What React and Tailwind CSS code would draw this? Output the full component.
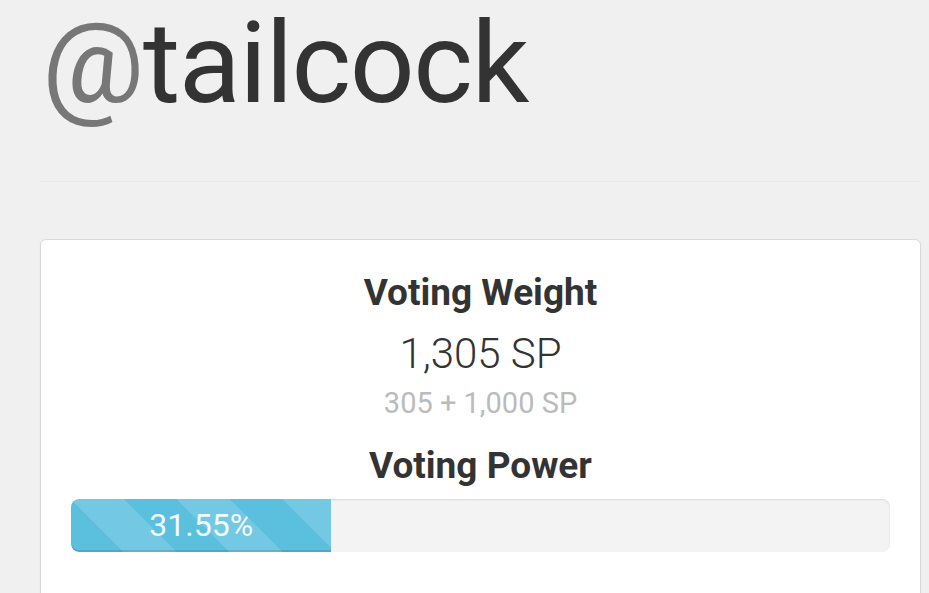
export default function App() {
  return (
    <div
      className="min-h-[593px] bg-[#f0f0f0] pl-[40px] pr-[8px] overflow-hidden"
      style={{ fontFamily: "Roboto, 'Liberation Sans', sans-serif" }}
    >
      <h1 className="-mt-[4px] pl-[2px] text-[114px] leading-[135px] font-normal text-[#333] tracking-[-1.5px]">
        <span className="text-[#777]">@</span>tailcock
      </h1>
      <div className="mt-[50px] h-px bg-[#e8e8e8]" />
      <div className="mt-[57px] h-[400px] rounded-[6px] border border-[#d9d9d9] bg-white shadow-[0_1px_2px_rgba(0,0,0,0.05)] px-[30px] pt-[33px]">
        <div className="flex flex-col items-center">
          <div className="text-[37px] leading-[40px] font-bold text-[#333]">Voting Weight</div>
          <div className="mt-[17px] text-[42px] leading-[48px] font-light text-[#333]">1,305 SP</div>
          <div className="mt-[9px] text-[29px] leading-[32px] font-normal text-[#bbb]">305 + 1,000 SP</div>
          <div className="mt-[27px] text-[37px] leading-[40px] font-bold text-[#333]">Voting Power</div>
        </div>
        <div className="mt-[13px] h-[53px] w-full rounded-[8px] bg-[#f3f3f3] shadow-[inset_0_1px_2px_rgba(0,0,0,0.1)] overflow-hidden">
          <div
            className="h-full rounded-l-[8px] bg-[#5bc0de] shadow-[inset_0_-2px_0_rgba(0,0,0,0.12)] text-center text-[32px] leading-[53px] text-[#f2fafd] bg-[length:106px_106px] bg-[linear-gradient(45deg,rgba(255,255,255,0.15)_25%,transparent_25%,transparent_50%,rgba(255,255,255,0.15)_50%,rgba(255,255,255,0.15)_75%,transparent_75%,transparent)]"
            style={{ width: "31.8%" }}
          >
            31.55%
          </div>
        </div>
      </div>
    </div>
  );
}
